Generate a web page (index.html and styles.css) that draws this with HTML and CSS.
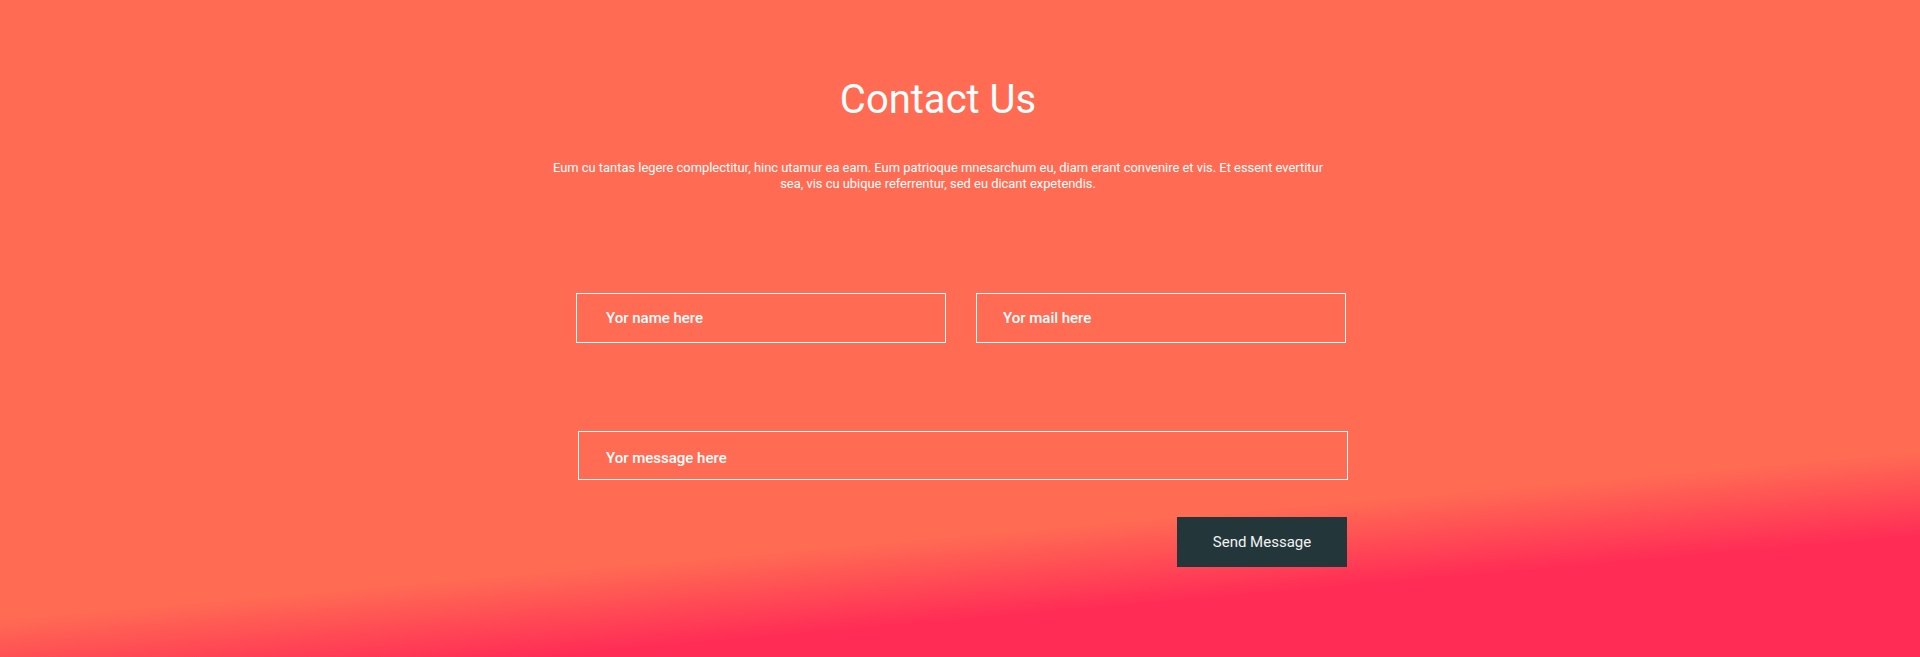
FILE: index.html
```html
<!DOCTYPE html>
<html lang="en">
<head>
<meta charset="utf-8">
<title>Contact Us</title>
<link rel="stylesheet" href="styles.css">
</head>
<body>
<section class="contact">
  <header class="contact-head">
    <h1 class="contact-title">Contact Us</h1>
    <p class="contact-lead">Eum cu tantas legere complectitur, hinc utamur ea eam. Eum patrioque mnesarchum eu, diam erant convenire et vis. Et essent evertitur sea, vis cu ubique referrentur, sed eu dicant expetendis.</p>
  </header>
  <form class="contact-form">
    <div class="row-two">
      <div class="field field-name">Yor name here</div>
      <div class="field field-mail">Yor mail here</div>
    </div>
    <div class="field field-message">Yor message here</div>
    <div class="actions">
      <button type="button" class="send-btn">Send Message</button>
    </div>
  </form>
</section>
</body>
</html>
```

FILE: styles.css
```css
html, body {
  margin: 0;
  padding: 0;
}
body {
  min-height: 100vh;
  font-family: Roboto, "Liberation Sans", Arial, sans-serif;
  color: #fff;
  background: linear-gradient(175deg, #ff6c53 0%, #ff6c53 75%, #ff2c56 85.5%, #ff2c56 100%);
}
.contact {
  padding-top: 76px;
}
.contact-head {
  width: 780px;
  margin: 0 auto;
  text-align: center;
  transform: translateX(-22px);
}
.contact-title {
  margin: 0;
  font-size: 40px;
  line-height: 48px;
  font-weight: 400;
}
.contact-lead {
  margin: 36px 0 0;
  font-size: 12.9px;
  line-height: 16px;
  font-weight: 400;
}
.contact-form {
  width: 772px;
  margin: 101px 0 0 calc(50% - 384px);
}
.row-two {
  display: flex;
  gap: 30px;
}
.field {
  box-sizing: border-box;
  height: 50px;
  border: 1px solid #fff;
  display: flex;
  align-items: center;
  font-size: 15px;
  font-weight: 500;
  color: #fff;
}
.field-name {
  width: 370px;
  padding-left: 29px;
}
.field-mail {
  width: 370px;
  padding-left: 26px;
}
.field-message {
  margin: 88px 0 0 2px;
  width: 770px;
  height: 49px;
  padding-left: 27px;
  padding-top: 4px;
}
.actions {
  display: flex;
  justify-content: flex-end;
  margin-top: 37px;
  padding-right: 1px;
}
.send-btn {
  width: 170px;
  height: 50px;
  border: 0;
  background: #23373b;
  color: #f2f2f2;
  font-family: Roboto, "Liberation Sans", Arial, sans-serif;
  font-size: 15px;
  font-weight: 400;
  padding: 0;
  cursor: pointer;
}
```
